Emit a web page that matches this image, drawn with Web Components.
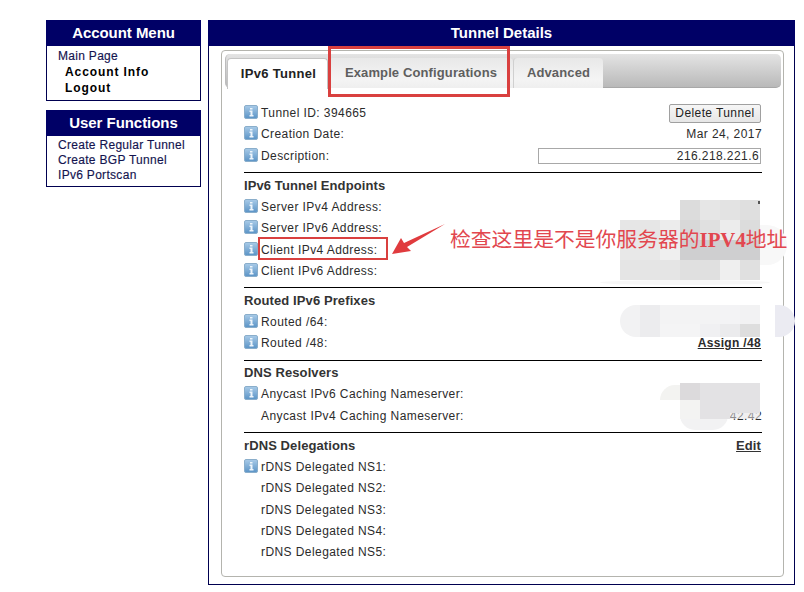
<!DOCTYPE html>
<html>
<head>
<meta charset="utf-8">
<title>Tunnel Details</title>
<style>
  html, body { margin: 0; background: #fff; }
  body {
    width: 804px; height: 592px; overflow: hidden; position: relative;
    font-family: "Liberation Sans", Arial, sans-serif;
    color: #222;
  }
</style>
</head>
<body>
<page-layout>
  <div slot="side">
    <menu-box heading="Account Menu" kind="account">
      <menu-link>Main Page</menu-link>
      <menu-link strong>Account Info</menu-link>
      <menu-link strong>Logout</menu-link>
    </menu-box>
    <menu-box heading="User Functions" kind="user">
      <menu-link>Create Regular Tunnel</menu-link>
      <menu-link>Create BGP Tunnel</menu-link>
      <menu-link>IPv6 Portscan</menu-link>
    </menu-box>
  </div>
  <tunnel-panel heading="Tunnel Details">
    <tab-strip></tab-strip>
    <info-row label="Tunnel ID: 394665" icon><push-button>Delete Tunnel</push-button></info-row>
    <info-row label="Creation Date:" icon>Mar 24, 2017</info-row>
    <info-row label="Description:" icon><text-field>216.218.221.6</text-field></info-row>
    <detail-section heading="IPv6 Tunnel Endpoints">
      <info-row label="Server IPv4 Address:" icon></info-row>
      <info-row label="Server IPv6 Address:" icon></info-row>
      <info-row label="Client IPv4 Address:" icon></info-row>
      <info-row label="Client IPv6 Address:" icon></info-row>
    </detail-section>
    <detail-section heading="Routed IPv6 Prefixes">
      <info-row label="Routed /64:" icon></info-row>
      <info-row label="Routed /48:" icon><b style="display:block;margin-right:1px;text-decoration:underline;letter-spacing:.33px">Assign /48</b></info-row>
    </detail-section>
    <detail-section heading="DNS Resolvers">
      <info-row label="Anycast IPv6 Caching Nameserver:" icon></info-row>
      <info-row label="Anycast IPv4 Caching Nameserver:">42.42</info-row>
    </detail-section>
    <detail-section heading="rDNS Delegations" action="Edit">
      <info-row label="rDNS Delegated NS1:" icon></info-row>
      <info-row label="rDNS Delegated NS2:"></info-row>
      <info-row label="rDNS Delegated NS3:"></info-row>
      <info-row label="rDNS Delegated NS4:"></info-row>
      <info-row label="rDNS Delegated NS5:"></info-row>
    </detail-section>
  </tunnel-panel>
</page-layout>
<markup-layer></markup-layer>

<script>
class PageLayout extends HTMLElement {
  constructor() {
    super();
    this.attachShadow({ mode: 'open' });
    this.shadowRoot.innerHTML = `
      <style>
        :host { display: flex; gap: 7px; padding: 20px 0 0 46px; align-items: flex-start; }
        .side { width: 155px; flex: none; }
      </style>
      <div class="side"><slot name="side"></slot></div>
      <slot></slot>
    `;
  }
}

class MenuBox extends HTMLElement {
  constructor() {
    super();
    this.attachShadow({ mode: 'open' });
  }
  connectedCallback() {
    const user = this.getAttribute('kind') === 'user';
    this.shadowRoot.innerHTML = `
      <style>
        :host { display: block; box-sizing: border-box; border: 1px solid #000050; margin-bottom: ${user ? 10 : 9}px; height: ${user ? 77 : 81}px; }
        h3 { margin: -1px -1px 0; height: 26px; line-height: 25px; background: #000066; color: #fff; font-size: 15px; font-weight: bold; letter-spacing: -.05px; text-align: center; }
        .list { padding: ${user ? 2 : 3}px 0 0 11px; }
      </style>
      <h3>${this.getAttribute('heading')}</h3>
      <div class="list"><slot></slot></div>
    `;
  }
}

class MenuLink extends HTMLElement {
  constructor() {
    super();
    this.attachShadow({ mode: 'open' });
    this.shadowRoot.innerHTML = `
      <style>
        :host { display: block; font-size: 12px; line-height: 15px; color: #14144f; letter-spacing: .3px; -webkit-text-stroke: .15px #14144f; }
        :host([strong]) { font-weight: bold; color: #000; padding-left: 7px; line-height: 16px; letter-spacing: .9px; -webkit-text-stroke: 0; }
      </style>
      <slot></slot>
    `;
  }
}

class TunnelPanel extends HTMLElement {
  constructor() {
    super();
    this.attachShadow({ mode: 'open' });
  }
  connectedCallback() {
    this.shadowRoot.innerHTML = `
      <style>
        :host { display: block; box-sizing: border-box; width: 587px; height: 565px; border: 1px solid #000050; }
        h2 { margin: -1px -1px 0; height: 26px; line-height: 25px; background: #000066; color: #fff; font-size: 15px; font-weight: bold; text-align: center; }
        .frame { box-sizing: border-box; margin: 4px 0 0 12px; width: 563px; height: 527px; border: 1px solid #b4b4ae; border-radius: 4px; padding: 3px 2px 0 3px; }
      </style>
      <h2>${this.getAttribute('heading')}</h2>
      <div class="frame"><slot></slot></div>
    `;
  }
}

class TabStrip extends HTMLElement {
  constructor() {
    super();
    this.attachShadow({ mode: 'open' });
    this.shadowRoot.innerHTML = `
      <style>
        :host { display: flex; box-sizing: border-box; height: 34px; margin-bottom: 14.5px; padding: 4px 0 0 1px; border-radius: 5px; background: linear-gradient(#e4e4e4, #b9b9b9); border-bottom: 1px solid #a8a8a8; border-left: 1px solid #bcbcbc; }
        .tab { box-sizing: border-box; height: 30px; padding-top: 7px; font-size: 13px; font-weight: bold; letter-spacing: .12px; color: #5f5f5f; text-align: center; border-radius: 4px 4px 0 0; background: linear-gradient(#e8e8e8, #f4f4f4 70%, #efefef); border-left: 1px solid #d0d0d0; }
        .on { background: #fff; color: #222; height: 31px; width: 101px; padding-left: 2px; letter-spacing: .3px; border: 1px solid #c4c4c4; border-bottom: 0; }
        .ex { width: 185px; }
        .ad { width: 90px; }
      </style>
      <div class="tab on">IPv6 Tunnel</div>
      <div class="tab ex">Example Configurations</div>
      <div class="tab ad">Advanced</div>
    `;
  }
}

class InfoIcon extends HTMLElement {
  constructor() {
    super();
    this.attachShadow({ mode: 'open' });
    this.shadowRoot.innerHTML = `
      <style>:host { display: block; width: 14px; height: 14px; } svg { display: block; }</style>
      <svg width="14" height="14" viewBox="0 0 14 14">
        <defs><linearGradient id="g" x1="0" y1="0" x2="0" y2="1">
          <stop offset="0" stop-color="#a9cbe8"/><stop offset="1" stop-color="#5a93c6"/>
        </linearGradient></defs>
        <rect x=".5" y=".5" width="13" height="13" rx="1.5" fill="url(#g)" stroke="#8aaecb"/>
        <rect x="6" y="3" width="2.500" height="1.500" fill="#eef5fb"/>
        <path d="M5.500 5.500h3v4.500h1v1.500h-4V10h1V7h-1z" fill="#eef5fb"/>
      </svg>
    `;
  }
}

class InfoRow extends HTMLElement {
  constructor() {
    super();
    this.attachShadow({ mode: 'open' });
  }
  connectedCallback() {
    this.shadowRoot.innerHTML = `
      <style>
        :host { display: flex; align-items: center; height: 21.3px; margin: 0 0 0 19px; width: 518px; font-size: 12px; letter-spacing: .42px; color: #2b2b2b; }
        .ic { width: 17px; flex: none; margin-top: -2px; }
        .label { flex: 1; white-space: nowrap; }
        .val { text-align: right; }
      </style>
      <div class="ic">${this.hasAttribute('icon') ? '<info-icon></info-icon>' : ''}</div>
      <div class="label">${this.getAttribute('label')}</div>
      <div class="val"><slot></slot></div>
    `;
  }
}

class DetailSection extends HTMLElement {
  constructor() {
    super();
    this.attachShadow({ mode: 'open' });
  }
  connectedCallback() {
    const action = this.getAttribute('action');
    this.shadowRoot.innerHTML = `
      <style>
        :host { display: block; }
        .head { display: flex; justify-content: space-between; box-sizing: border-box; width: 518px; margin: 5.9px 0 0 19px; border-top: 1px solid #000; height: 24px; padding: 4.4px 1px 0 0; font-size: 13px; font-weight: bold; letter-spacing: .1px; color: #333; line-height: 16px; }
      </style>
      <div class="head"><span>${this.getAttribute('heading')}</span>${action ? `<u>${action}</u>` : ''}</div>
      <slot></slot>
    `;
  }
}

class PushButton extends HTMLElement {
  constructor() {
    super();
    this.attachShadow({ mode: 'open' });
    this.shadowRoot.innerHTML = `
      <style>
        :host { display: block; box-sizing: border-box; width: 92px; height: 19px; line-height: 17px; text-align: center; border: 1px solid #a0a0a0; border-radius: 2px; background: linear-gradient(#f6f6f6, #e6e6e6); color: #222; margin-right: 1px; letter-spacing: .4px; }
      </style>
      <slot></slot>
    `;
  }
}

class TextField extends HTMLElement {
  constructor() {
    super();
    this.attachShadow({ mode: 'open' });
    this.shadowRoot.innerHTML = `
      <style>
        :host { display: block; box-sizing: border-box; width: 223px; height: 16px; line-height: 14px; text-align: right; border: 1px solid #a8a8a8; padding-right: 1px; margin-right: 1px; }
      </style>
      <slot></slot>
    `;
  }
}

// the red annotations and mosaic patches sit on top of the page
class MarkupLayer extends HTMLElement {
  constructor() {
    super();
    this.attachShadow({ mode: 'open' });
    const cells = [
      [680,200,20,20,'#dcdcdc'],[700,200,20,20,'#e6e6e6'],[720,200,20,20,'#e3e3e3'],[740,200,20,20,'#dfdfdf'],
      [620,220,40,20,'#e6e6e6'],[660,220,20,20,'#ececec'],[680,220,20,20,'#d8d8d8'],[700,220,20,20,'#e0e0e0'],[720,220,20,20,'#ececec'],[740,220,20,20,'#dcdcdc'],
      [620,240,40,20,'#e8e8e8'],[660,240,20,20,'#efefef'],[680,240,80,20,'#cfcfd0'],
      [620,260,60,20,'#e5e5e5'],[680,260,40,20,'#e0e0e0'],[720,260,20,20,'#efefef'],[740,260,20,20,'#e0e0e0'],
      [640,305,20,32,'#ececee'],[660,305,60,19,'#f3f3f4'],[660,324,40,13,'#f4f4f5'],[700,324,20,13,'#f0f0f2'],[720,305,20,19,'#f3f3f5'],[720,324,20,13,'#ebebed'],[740,305,20,19,'#f2f2f3'],[740,324,20,13,'#dedede'],
      [680,383,20,17,'#dcdadc'],[700,383,60,30,'#e3e2e4'],[700,413,30,6,'#e3e2e4'],[730,413,30,6,'rgba(227,226,228,.55)'],[680,400,20,19,'#f3f3f2']
    ];
    this.shadowRoot.innerHTML = `
      <style>
        :host { display: block; position: absolute; left: 0; top: 0; width: 804px; height: 592px; pointer-events: none; }
        .c, .blob, .box, .note, svg { position: absolute; }
        .blob { background: #f2f2f3; }
        .box { box-sizing: border-box; border: 3px solid #d9403f; }
        .thin { border-width: 2px; }
        .note { left: 450px; top: 228px; font: 20.8px/24px "Liberation Serif", "Noto Sans CJK SC", serif; color: #e2474f; white-space: nowrap; }
        .note b { font-family: "Liberation Serif", serif; font-weight: bold; }
      </style>
      <div class="blob" style="left:600px;top:280px;width:170px;height:5px;border-radius:50%;background:#f7f7f7"></div>
      <div class="blob" style="left:760px;top:225px;width:27px;height:40px;border-radius:0 20px 20px 0;background:#f8f8f8"></div>
      <div class="blob" style="left:620px;top:305px;width:40px;height:32px;border-radius:16px 0 0 16px"></div>
      <div class="blob" style="left:775px;top:305px;width:20px;height:32px;border-radius:0 16px 16px 0;background:#ebebf2"></div>
      <div class="blob" style="left:660px;top:385px;width:30px;height:15px;border-radius:15px 0 0 0;background:#f3f3f1"></div>
      <div class="blob" style="left:680px;top:415px;width:48px;height:15px;border-radius:0 0 20px 20px"></div>
      ${cells.map(c => `<div class="c" style="left:${c[0]}px;top:${c[1]}px;width:${c[2]}px;height:${c[3]}px;background:${c[4]}"></div>`).join('')}
      <div class="blob" style="left:758px;top:201px;width:2px;height:3px;background:#555"></div>
      <div class="box" style="left:328px;top:46px;width:182px;height:51px"></div>
      <div class="box thin" style="left:258px;top:237px;width:130px;height:23px"></div>
      <svg style="left:388px;top:222px" width="60" height="36" viewBox="0 0 60 36">
        <path d="M4 32 L13 16 L16 21 L57 2 L19 25 L23 29 Z" fill="#e03b3e"/>
      </svg>
      <div class="note">检查这里是不是你服务器的<b>IPV4</b>地址</div>
    `;
  }
}

customElements.define('page-layout', PageLayout);
customElements.define('menu-box', MenuBox);
customElements.define('menu-link', MenuLink);
customElements.define('tunnel-panel', TunnelPanel);
customElements.define('tab-strip', TabStrip);
customElements.define('info-icon', InfoIcon);
customElements.define('info-row', InfoRow);
customElements.define('detail-section', DetailSection);
customElements.define('push-button', PushButton);
customElements.define('text-field', TextField);
customElements.define('markup-layer', MarkupLayer);
</script>
</body>
</html>
